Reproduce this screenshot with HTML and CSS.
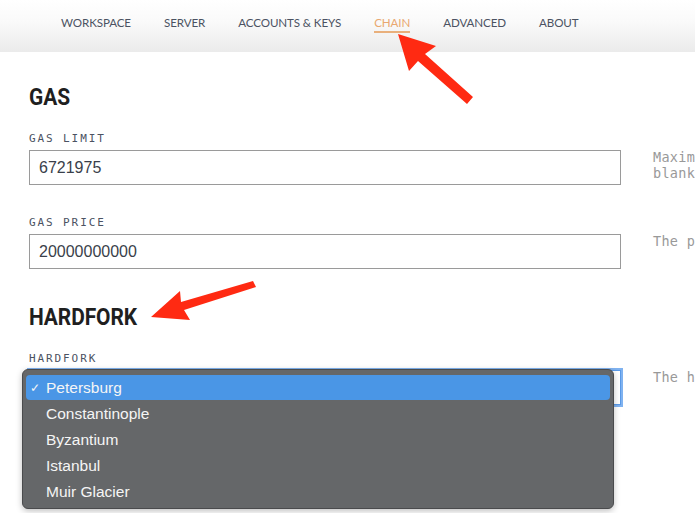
FILE: index.html
```html
<!DOCTYPE html>
<html>
<head>
<meta charset="utf-8">
<link rel="stylesheet" href="styles.css">
</head>
<body>
<header class="topbar">
  <nav class="nav">
    <span class="nav-item">WORKSPACE</span>
    <span class="nav-item">SERVER</span>
    <span class="nav-item">ACCOUNTS &amp; KEYS</span>
    <span class="nav-item active">CHAIN</span>
    <span class="nav-item">ADVANCED</span>
    <span class="nav-item">ABOUT</span>
  </nav>
</header>
<main class="content">
  <h2 class="section-title">GAS</h2>
  <div class="row">
    <div class="field">
      <div class="label">GAS LIMIT</div>
      <div class="input">6721975</div>
    </div>
    <div class="help">Maxim<br>blank</div>
  </div>
  <div class="row">
    <div class="field">
      <div class="label">GAS PRICE</div>
      <div class="input">20000000000</div>
    </div>
    <div class="help">The p</div>
  </div>
  <h2 class="section-title hf">HARDFORK</h2>
  <div class="row">
    <div class="field">
      <div class="label">HARDFORK</div>
      <div class="input select"></div>
    </div>
    <div class="help">The h</div>
  </div>
</main>
<div class="dropdown">
  <div class="opt selected"><span class="check">✓</span><span>Petersburg</span></div>
  <div class="opt"><span class="check"></span><span>Constantinople</span></div>
  <div class="opt"><span class="check"></span><span>Byzantium</span></div>
  <div class="opt"><span class="check"></span><span>Istanbul</span></div>
  <div class="opt"><span class="check"></span><span>Muir Glacier</span></div>
</div>
<svg class="arrows" width="695" height="513" viewBox="0 0 695 513">
  <g fill="#ff2a12">
    <path d="M398 34 L436 46 L425 54 L473 97 L467 104 L418 61 L409 71 Z"/>
    <path d="M151 317 L180 291 L181 302 L253 281 L256 287 L184 310 L190 320 Z"/>
  </g>
</svg>
</body>
</html>
```

FILE: styles.css
```css
html, body {
  margin: 0;
  padding: 0;
  width: 695px;
  height: 513px;
  overflow: hidden;
  background: #fff;
  font-family: "Liberation Sans", Arial, sans-serif;
  position: relative;
}

.topbar {
  height: 52px;
  background: linear-gradient(to bottom, #ffffff 0%, #fafafa 40%, #ebebeb 100%);
}

.nav {
  display: flex;
  padding-left: 61px;
  padding-top: 16px;
}

.nav-item {
  font-family: Lato, "Open Sans", sans-serif;
  font-size: 11.6px;
  letter-spacing: -0.1px;
  color: #4b5262;
  margin-right: 33px;
  line-height: 14px;
  padding-bottom: 1px;
  border-bottom: 2px solid transparent;
}

.nav-item.active {
  color: #e9a870;
  border-bottom-color: #e9b07c;
}

.content {
  padding-left: 29px;
  padding-top: 33px;
}

.section-title {
  margin: 0 0 21px 0;
  font-family: Roboto, sans-serif;
  font-weight: 700;
  font-size: 23px;
  line-height: 26px;
  color: #1f1f1f;
  letter-spacing: -0.1px;
  transform: scaleX(0.91);
  transform-origin: left center;
}

.section-title.hf {
  margin-top: 36px;
}

.row {
  display: flex;
  gap: 32px;
  margin-bottom: 31px;
}

.field {
  width: 592px;
  flex: none;
}

.label {
  font-family: "DejaVu Sans Mono", monospace;
  font-size: 11px;
  letter-spacing: 1.9px;
  color: #4b5262;
  line-height: 14px;
  margin-bottom: 4px;
}

.input {
  box-sizing: border-box;
  height: 35px;
  border: 1px solid #9a9a9a;
  padding: 0 9px;
  font-size: 16px;
  line-height: 33px;
  color: #3a3f4a;
}

.input.select {
  border-color: #5a9ae8;
  box-shadow: 0 0 0 2px #7fb2f0;
}

.help {
  font-family: "DejaVu Sans Mono", monospace;
  font-size: 13.5px;
  letter-spacing: 0.3px;
  color: #999;
  line-height: 16px;
  padding-top: 17px;
  white-space: nowrap;
}

.dropdown {
  position: absolute;
  left: 22px;
  top: 369px;
  width: 584px;
  height: 129px;
  padding: 5px 3px 4px 3px;
  background: #656769;
  border: 1px solid #4a4b4d;
  border-radius: 6px;
  box-shadow: 0 2px 6px rgba(0,0,0,0.25);
}

.opt {
  display: flex;
  align-items: center;
  height: 26px;
  font-size: 15.5px;
  color: #f5f5f5;
  font-family: "Liberation Sans", Arial, sans-serif;
}

.opt.selected {
  background: #4a96e6;
  border-radius: 4px;
  height: 25px;
  margin-bottom: 1px;
}

.check {
  width: 20px;
  flex: none;
  padding-left: 4px;
  box-sizing: border-box;
  font-size: 12px;
  overflow: hidden;
}

.arrows {
  position: absolute;
  left: 0;
  top: 0;
  pointer-events: none;
}
```
